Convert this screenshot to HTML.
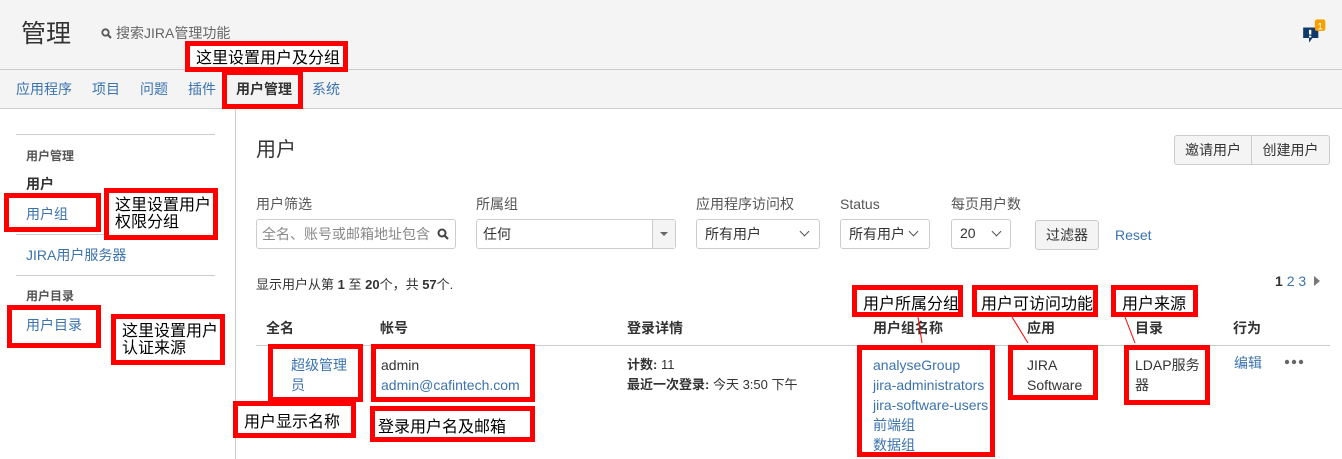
<!DOCTYPE html>
<html><head><meta charset="utf-8"><style>
*{margin:0;padding:0;box-sizing:border-box}
body{width:1342px;height:459px;overflow:hidden;background:#fff;position:relative;font-family:"Liberation Sans","Noto Sans CJK SC",sans-serif;font-size:14px;color:#333;line-height:17px}
.a{position:absolute;white-space:nowrap}
.l{color:#3b73af}
.b{font-weight:bold}
.r{position:absolute;border:5px solid #f00;background:transparent}
.rw{position:absolute;border:5px solid #f00;background:#fff;color:#000;font-size:16px;line-height:17px;padding:2px 6px;white-space:nowrap;font-family:"WenQuanYi Zen Hei","Noto Sans CJK SC",sans-serif}
.inp{position:absolute;border:1px solid #ccc;border-radius:3px;background:#fff;height:30px}
.btn{position:absolute;border:1px solid #ccc;border-radius:3px;background:#f4f4f4;height:30px;text-align:center;line-height:28px}
.hl{position:absolute;height:1px;background:#ccc}
.chev{position:absolute;width:7px;height:7px;border-right:1px solid #555;border-bottom:1px solid #555;transform:rotate(45deg)}
</style></head><body>
<div class="a" style="left:0;top:0;width:1342px;height:108px;background:#f4f4f4"></div>
<div class="hl" style="left:0;top:69px;width:1342px"></div>
<div class="hl" style="left:0;top:108px;width:1342px"></div>
<div class="a" style="left:21px;top:19px;font-size:25px;line-height:30px;color:#333">管理</div>
<svg class="a" style="left:101px;top:28px" width="11" height="11" viewBox="0 0 11 11"><circle cx="4.5" cy="4.5" r="3.2" stroke="#555" stroke-width="1.8" fill="none"/><path d="M7 7L10 10" stroke="#555" stroke-width="2"/></svg>
<div class="a" style="left:116px;top:25px;color:#666">搜索JIRA管理功能</div>
<svg class="a" style="left:1302px;top:17px" width="28" height="28" viewBox="0 0 24 24"><path d="M1 9h13v9H9l-3 4v-4H1z" fill="#0f3a6b"/><rect x="6" y="11" width="2" height="4" fill="#fff"/><rect x="6" y="16" width="2" height="1.5" fill="#fff"/><rect x="11" y="2" width="9" height="10" rx="2" fill="#f6a100"/><text x="15.5" y="10.5" font-size="8" fill="#fff" text-anchor="middle" font-family="Liberation Sans">1</text></svg>
<div class="a l" style="left:16px;top:81px">应用程序</div>
<div class="a l" style="left:92px;top:81px">项目</div>
<div class="a l" style="left:140px;top:81px">问题</div>
<div class="a l" style="left:188px;top:81px">插件</div>
<div class="a b" style="left:236px;top:81px">用户管理</div>
<div class="a l" style="left:312px;top:81px">系统</div>
<div class="a" style="left:235px;top:108px;width:1px;height:351px;background:#ccc"></div>
<div class="hl" style="left:16px;top:134px;width:199px"></div>
<div class="a b" style="left:26px;top:148px;font-size:12px;color:#555">用户管理</div>
<div class="a b" style="left:26px;top:176px;color:#333">用户</div>
<div class="a l" style="left:26px;top:206px">用户组</div>
<div class="hl" style="left:16px;top:234px;width:199px"></div>
<div class="a l" style="left:26px;top:247px">JIRA用户服务器</div>
<div class="hl" style="left:16px;top:275px;width:199px"></div>
<div class="a b" style="left:26px;top:288px;font-size:12px;color:#555">用户目录</div>
<div class="a l" style="left:26px;top:317px">用户目录</div>
<div class="a" style="left:256px;top:138px;font-size:20px;line-height:24px">用户</div>
<div class="btn" style="left:1174px;top:135px;width:78px;border-radius:3px 0 0 3px">邀请用户</div>
<div class="btn" style="left:1251px;top:135px;width:79px;border-radius:0 3px 3px 0">创建用户</div>
<div class="a" style="left:256px;top:196px;color:#555">用户筛选</div>
<div class="inp" style="left:256px;top:219px;width:200px"></div>
<div class="a" style="left:262px;top:226px;color:#888">全名、账号或邮箱地址包含</div>
<svg class="a" style="left:437px;top:228px" width="12" height="12" viewBox="0 0 12 12"><circle cx="5" cy="5" r="3.5" stroke="#444" stroke-width="2" fill="none"/><path d="M7.5 7.5L11 11" stroke="#444" stroke-width="2.2"/></svg>
<div class="a" style="left:476px;top:196px;color:#555">所属组</div>
<div class="inp" style="left:476px;top:219px;width:200px"></div>
<div class="a" style="left:652px;top:220px;width:1px;height:28px;background:#ccc"></div>
<div class="a" style="left:653px;top:220px;width:22px;height:28px;background:#f4f4f4"></div>
<div class="a" style="left:660px;top:232px;border-left:4px solid transparent;border-right:4px solid transparent;border-top:4px solid #666"></div>
<div class="a" style="left:483px;top:226px">任何</div>
<div class="a" style="left:696px;top:196px;color:#555">应用程序访问权</div>
<div class="inp" style="left:696px;top:219px;width:124px"></div>
<div class="a" style="left:705px;top:226px">所有用户</div><div class="chev" style="left:801px;top:228px"></div>
<div class="a" style="left:840px;top:196px;color:#555">Status</div>
<div class="inp" style="left:840px;top:219px;width:90px"></div>
<div class="a" style="left:849px;top:226px">所有用户</div><div class="chev" style="left:910px;top:228px"></div>
<div class="a" style="left:951px;top:196px;color:#555">每页用户数</div>
<div class="inp" style="left:951px;top:219px;width:60px"></div>
<div class="a" style="left:960px;top:225px">20</div><div class="chev" style="left:993px;top:228px"></div>
<div class="btn" style="left:1035px;top:220px;width:64px">过滤器</div>
<div class="a l" style="left:1115px;top:227px">Reset</div>
<div class="a" style="left:256px;top:276px;font-size:13px">显示用户从第 <b>1</b> 至 <b>20</b>个，共 <b>57</b>个.</div>
<div class="a" style="left:1275px;top:273px"><b>1</b> <span class="l">2 3</span></div>
<div class="a" style="left:1314px;top:276px;border-top:5px solid transparent;border-bottom:5px solid transparent;border-left:6px solid #777"></div>
<div class="a b" style="left:266px;top:320px">全名</div>
<div class="a b" style="left:380px;top:320px">帐号</div>
<div class="a b" style="left:627px;top:320px">登录详情</div>
<div class="a b" style="left:873px;top:320px">用户组名称</div>
<div class="a b" style="left:1027px;top:320px">应用</div>
<div class="a b" style="left:1135px;top:320px">目录</div>
<div class="a b" style="left:1233px;top:320px">行为</div>
<div class="hl" style="left:256px;top:345px;width:1074px"></div>
<div class="a l" style="left:291px;top:355px;line-height:20px">超级管理<br>员</div>
<div class="a" style="left:381px;top:355px;line-height:20px">admin<br><span class="l">admin@cafintech.com</span></div>
<div class="a" style="left:627px;top:355px;line-height:20px;font-size:13px"><b>计数:</b> 11<br><b>最近一次登录:</b> 今天 3:50 下午</div>
<div class="a l" style="left:873px;top:355px;line-height:20px">analyseGroup<br>jira-administrators<br>jira-software-users<br>前端组<br>数据组</div>
<div class="a" style="left:1027px;top:355px;line-height:20px">JIRA<br>Software</div>
<div class="a" style="left:1135px;top:355px;line-height:20px">LDAP服务<br>器</div>
<div class="a l" style="left:1234px;top:355px">编辑</div>
<svg class="a" style="left:1284px;top:359px" width="20" height="6"><circle cx="3" cy="3" r="2.2" fill="#666"/><circle cx="10" cy="3" r="2.2" fill="#666"/><circle cx="17" cy="3" r="2.2" fill="#666"/></svg>

<div class="rw" style="left:185px;top:41px;width:163px;height:31px">这里设置用户及分组</div>
<div class="r" style="left:222px;top:70px;width:81px;height:39px"></div>
<div class="r" style="left:4px;top:193px;width:97px;height:39px"></div>
<div class="rw" style="left:104px;top:188px;width:114px;height:52px">这里设置用户<br>权限分组</div>
<div class="r" style="left:7px;top:305px;width:94px;height:43px"></div>
<div class="rw" style="left:111px;top:314px;width:114px;height:51px">这里设置用户<br>认证来源</div>
<div class="r" style="left:268px;top:344px;width:95px;height:58px"></div>
<div class="rw" style="left:233px;top:401px;width:123px;height:37px;padding-top:6px">用户显示名称</div>
<div class="r" style="left:371px;top:344px;width:164px;height:58px"></div>
<div class="rw" style="left:370px;top:406px;width:165px;height:36px;padding-top:6px;padding-left:3px">登录用户名及邮箱</div>
<div class="rw" style="left:852px;top:285px;width:111px;height:32px;padding-top:4px">用户所属分组</div>
<div class="r" style="left:857px;top:345px;width:138px;height:112px"></div>
<div class="rw" style="left:972px;top:285px;width:126px;height:32px;padding-top:4px;padding-left:4px">用户可访问功能</div>
<div class="r" style="left:1008px;top:345px;width:90px;height:55px"></div>
<div class="rw" style="left:1111px;top:285px;width:87px;height:32px;padding-top:4px">用户来源</div>
<div class="r" style="left:1124px;top:345px;width:86px;height:60px"></div>
<svg class="a" style="left:0;top:0" width="1342" height="459"><g stroke="#f00" stroke-width="1" fill="#f00"><path d="M918 317L922 343"/><path d="M1012 317L1028 343"/><path d="M1125 317L1135 343"/></g></svg>
</body></html>
